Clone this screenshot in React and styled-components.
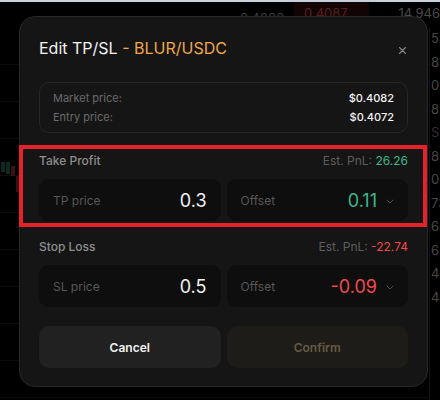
import styled, { createGlobalStyle } from "styled-components";

const GlobalStyle = createGlobalStyle`
  * { box-sizing: border-box; }
  html, body { margin: 0; padding: 0; background: #000; }
  body { font-family: Inter, "Noto Sans", sans-serif; }
`;

const bookRows = ["53", "89", "01", "82", "Sp", "83", "04", "73", "64", "65", "42", "44"];

function Chevron() {
  return (
    <svg width="8" height="5" viewBox="0 0 8 5" fill="none">
      <path d="M1 1l3 3 3-3" stroke="#4a4a4a" strokeWidth="1" strokeLinecap="round" strokeLinejoin="round" />
    </svg>
  );
}

function CloseIcon() {
  return (
    <svg width="7" height="7" viewBox="0 0 7 7" fill="none">
      <path d="M0.5 0.5l6 6M6.5 0.5l-6 6" stroke="#8a8a8a" strokeWidth="1.1" strokeLinecap="round" />
    </svg>
  );
}

function PriceField({ label, value, tone, select }) {
  return (
    <Field>
      <FieldLabel>{label}</FieldLabel>
      <FieldValue $tone={tone}>{value}</FieldValue>
      {select && <ChevronWrap><Chevron /></ChevronWrap>}
    </Field>
  );
}

function Section({ title, pnl, tone, price, priceLabel, offset, first }) {
  return (
    <SectionBox $first={first}>
      <SectionHead>
        <SectionTitle>{title}</SectionTitle>
        <Pnl>
          Est. PnL: <PnlValue $tone={tone}>{pnl}</PnlValue>
        </Pnl>
      </SectionHead>
      <FieldGrid>
        <PriceField label={priceLabel} value={price} />
        <PriceField label="Offset" value={offset} tone={tone} select />
      </FieldGrid>
    </SectionBox>
  );
}

export default function App() {
  return (
    <Screen>
      <GlobalStyle />
      <Backdrop>
        <TopStrip />
        <Ticker>
          <DimPrice>0.4200</DimPrice>
          <AskBox>0.4087</AskBox>
          <DimSize>14,946</DimSize>
        </Ticker>
        <MainArea>
          <Chart>
            <Candles>
              <Candle $h={10} $up />
              <Candle $h={12} $up />
              <Candle $h={10} $off={4} />
              <Candle $h={16} $off={14} />
            </Candles>
          </Chart>
          <BookColumn>
            {bookRows.map((r, i) => (
              <BookRow key={i} $muted={r === "Sp"}>{r}</BookRow>
            ))}
          </BookColumn>
        </MainArea>
      </Backdrop>

      <Overlay>
        <Modal>
          <TitleRow>
            <Title>
              Edit TP/SL <Pair>- BLUR/USDC</Pair>
            </Title>
            <CloseButton><CloseIcon /></CloseButton>
          </TitleRow>

          <InfoBox>
            <InfoRow>
              <InfoLabel>Market price:</InfoLabel>
              <InfoValue>$0.4082</InfoValue>
            </InfoRow>
            <InfoRow>
              <InfoLabel>Entry price:</InfoLabel>
              <InfoValue>$0.4072</InfoValue>
            </InfoRow>
          </InfoBox>

          <Section first title="Take Profit" pnl="26.26" tone="up" priceLabel="TP price" price="0.3" offset="0.11" />
          <Section title="Stop Loss" pnl="-22.74" tone="down" priceLabel="SL price" price="0.5" offset="-0.09" />

          <Actions>
            <ActionButton>Cancel</ActionButton>
            <ActionButton $confirm>Confirm</ActionButton>
          </Actions>
        </Modal>
        <Highlight />
      </Overlay>
    </Screen>
  );
}

const toneColor = (t) => (t === "up" ? "#3db88b" : t === "down" ? "#f04a4a" : "#f2f2f2");

const Screen = styled.div`
  position: relative;
  width: 440px;
  height: 400px;
  overflow: hidden;
  background: #000;
`;

const Backdrop = styled.div`
  display: flex;
  flex-direction: column;
  height: 100%;
`;

const TopStrip = styled.div`
  height: 2px;
  background: #c9cfda;
`;

const Ticker = styled.div`
  display: flex;
  align-items: flex-start;
  height: 26px;
  padding-left: 240px;
  font-size: 13px;
  color: #3e3e3e;
`;

const DimPrice = styled.span`
  margin-top: 8px;
  width: 57px;
`;

const AskBox = styled.span`
  width: 78px;
  height: 22px;
  padding: 3px 0 0 10px;
  background: #120404;
  color: #5b1e1e;
`;

const DimSize = styled.span`
  margin: 3px 0 0 30px;
  font-size: 13px;
  color: #4a4a4a;
  white-space: nowrap;
`;

const MainArea = styled.div`
  flex: 1;
  display: flex;
`;

const Chart = styled.div`
  flex: 1;
  padding-top: 134px;
  background-image: repeating-linear-gradient(
    to bottom,
    transparent 0,
    transparent 36px,
    #0c0c0c 36px,
    #0c0c0c 37px
  );
`;

const Candles = styled.div`
  display: flex;
  gap: 1px;
  padding-left: 1px;
  align-items: flex-start;
`;

const Candle = styled.span`
  width: 4px;
  height: ${(p) => p.$h}px;
  margin-top: ${(p) => p.$off || 0}px;
  background: ${(p) => (p.$up ? "#0d2a22" : "#3a1414")};
`;

const BookColumn = styled.div`
  width: 11px;
  border-left: 1px solid #141414;
  padding: 2px 0 0 1px;
  display: flex;
  flex-direction: column;
  overflow: hidden;
`;

const BookRow = styled.span`
  height: 23.5px;
  font-size: 13px;
  color: ${(p) => (p.$muted ? "#2e2e2e" : "#474747")};
  white-space: nowrap;
`;

const Overlay = styled.div`
  position: absolute;
  inset: 0;
  padding: 16px 0 0 19px;
`;

const Modal = styled.div`
  width: 409px;
  display: flex;
  flex-direction: column;
  padding: 21px 19px 18px;
  background: #151515;
  border: 1px solid #272727;
  border-radius: 16px;
`;

const TitleRow = styled.div`
  display: flex;
  align-items: center;
  justify-content: space-between;
  height: 20px;
`;

const Title = styled.h2`
  margin: 0;
  font-size: 16px;
  line-height: 20px;
  font-weight: 400;
  color: #f2f2f2;
`;

const Pair = styled.span`
  color: #f2a64b;
`;

const CloseButton = styled.span`
  display: flex;
  margin: 4px 2px 0 0;
`;

const InfoBox = styled.div`
  margin-top: 24px;
  display: flex;
  flex-direction: column;
  gap: 3px;
  padding: 7px 13px;
  border: 1px solid #262626;
  border-radius: 10px;
`;

const InfoRow = styled.div`
  display: flex;
  justify-content: space-between;
  font-size: 11px;
  line-height: 16px;
`;

const InfoLabel = styled.span`
  color: #6a6a6a;
`;

const InfoValue = styled.span`
  color: #f4f4f4;
  font-weight: 500;
`;

const SectionBox = styled.div`
  margin-top: ${(p) => (p.$first ? 20 : 18)}px;
`;

const SectionHead = styled.div`
  display: flex;
  justify-content: space-between;
  font-size: 12px;
  line-height: 16px;
  margin-bottom: 10px;
`;

const SectionTitle = styled.span`
  color: #8e8e8e;
  font-weight: 500;
`;

const Pnl = styled.span`
  color: #5e5e5e;
`;

const PnlValue = styled.span`
  color: ${(p) => toneColor(p.$tone)};
`;

const FieldGrid = styled.div`
  display: grid;
  grid-template-columns: 1fr 1fr;
  gap: 6px;
`;

const Field = styled.div`
  display: flex;
  align-items: center;
  height: 42px;
  padding: 0 14px;
  background: #0e0e0e;
  border-radius: 9px;
`;

const FieldLabel = styled.span`
  flex: 1;
  font-size: 12px;
  color: #575757;
`;

const FieldValue = styled.span`
  font-size: 18px;
  color: ${(p) => toneColor(p.$tone)};
`;

const ChevronWrap = styled.span`
  display: flex;
  margin: 2px 0 0 9px;
`;

const Actions = styled.div`
  margin-top: 19px;
  display: grid;
  grid-template-columns: 1fr 1fr;
  gap: 6px;
`;

const ActionButton = styled.button`
  height: 42px;
  border: none;
  border-radius: 10px;
  font-family: Inter, "Noto Sans", sans-serif;
  font-size: 12px;
  font-weight: 600;
  background: ${(p) => (p.$confirm ? "#1e1c18" : "#212121")};
  color: ${(p) => (p.$confirm ? "#655a44" : "#f2f2f2")};
`;

const Highlight = styled.div`
  position: absolute;
  left: 19px;
  top: 145px;
  width: 408px;
  height: 82px;
  border: 4px solid #e5222a;
  pointer-events: none;
`;
